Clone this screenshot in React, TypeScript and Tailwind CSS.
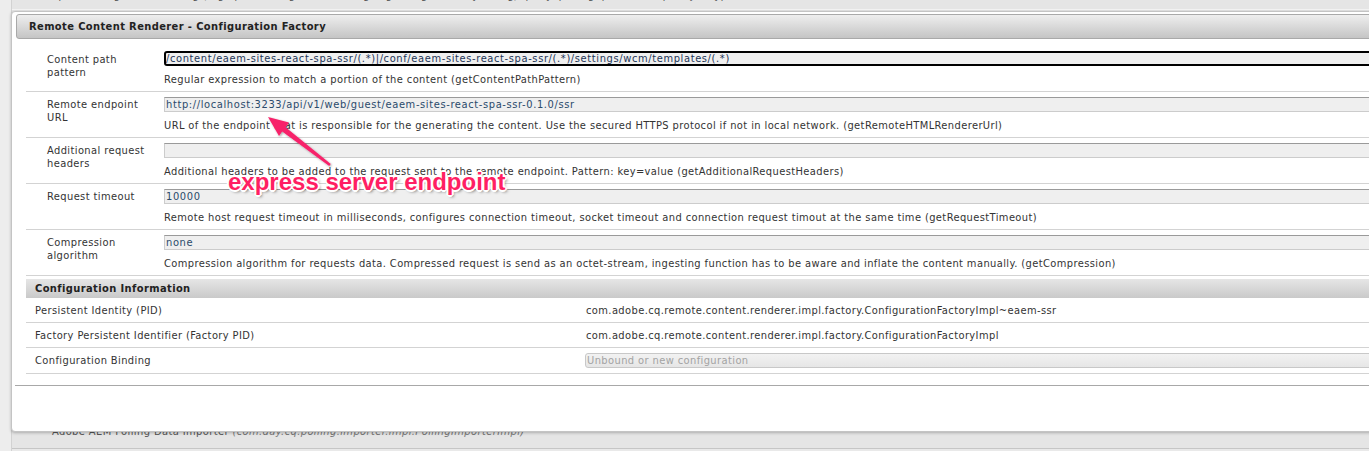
import React from "react";

type Row = {
  label: string[];
  value: React.ReactNode;
  desc: string;
  focused?: boolean;
};

const Sq = ({ children }: { children: React.ReactNode }) => (
  <span className="underline decoration-wavy decoration-[#e03030] decoration-[1px] underline-offset-[2px]">
    {children}
  </span>
);

const rows: Row[] = [
  {
    label: ["Content path", "pattern"],
    value: (
      <>
        /content/<Sq>eaem</Sq>-sites-react-spa-<Sq>ssr</Sq>/(.*)|/<Sq>conf</Sq>/<Sq>eaem</Sq>-sites-react-spa-<Sq>ssr</Sq>/(.*)/settings/<Sq>wcm</Sq>/templates/(.*)
      </>
    ),
    desc: "Regular expression to match a portion of the content (getContentPathPattern)",
    focused: true,
  },
  {
    label: ["Remote endpoint", "URL"],
    value: "http://localhost:3233/api/v1/web/guest/eaem-sites-react-spa-ssr-0.1.0/ssr",
    desc: "URL of the endpoint that is responsible for the generating the content. Use the secured HTTPS protocol if not in local network. (getRemoteHTMLRendererUrl)",
  },
  {
    label: ["Additional request", "headers"],
    value: "",
    desc: "Additional headers to be added to the request sent to the remote endpoint. Pattern: key=value (getAdditionalRequestHeaders)",
  },
  {
    label: ["Request timeout"],
    value: "10000",
    desc: "Remote host request timeout in milliseconds, configures connection timeout, socket timeout and connection request timout at the same time (getRequestTimeout)",
  },
  {
    label: ["Compression", "algorithm"],
    value: "none",
    desc: "Compression algorithm for requests data. Compressed request is send as an octet-stream, ingesting function has to be aware and inflate the content manually. (getCompression)",
  },
];

export default function App() {
  return (
    <div className="relative w-[1369px] h-[451px] overflow-hidden bg-[#e5e5e5] font-['DejaVu_Sans_Condensed','DejaVu_Sans',sans-serif] text-[11px] leading-[13px] tracking-[0.4px] text-[#333]">
      {/* background page */}
      <div className="flex h-full">
        <div className="w-[12px] h-full bg-[#ededed] border-r border-[#d2d2d2]" />
        <div className="flex-1 flex flex-col">
          <div className="h-[10px] overflow-hidden border-b border-[#f4f4f4] pl-[40px]">
            <div className="-mt-[11px] whitespace-nowrap text-[#555] italic">
              Apache Sling Commons Log (org.apache.sling.commons.log.LogManager.factory.config) query, polling, param, adapter, jcr, type
            </div>
          </div>
          <div className="flex-1" />
          <div className="h-[30px] border-b border-[#c6c6c6] pl-[40px] pt-[6px] whitespace-nowrap text-[#555]">
            Adobe AEM Polling Data Importer{" "}
            <span className="italic text-[#777]">(com.day.cq.polling.importer.impl.PollingImporterImpl)</span>
          </div>
          <div className="h-[2px] bg-[#e9e9e9]" />
        </div>
      </div>

      {/* dialog */}
      <div className="absolute left-[11px] top-[11px] w-[1400px] h-[421px] bg-white border border-[#c4c4c4] rounded-[4px] shadow-[0_1px_3px_rgba(0,0,0,0.25)] flex flex-col">
        <div className="ml-[4px] mt-[2px] h-[25px] rounded-[3px] border border-[#a9a9a9] bg-gradient-to-b from-[#eeeeee] to-[#c5c5c5] flex items-center pl-[12px] font-bold text-[#222]">
          Remote Content Renderer - Configuration Factory
        </div>

        <div className="ml-[14px] mt-[7px] flex flex-col">
          {rows.map((r, i) => (
            <div key={i} className="flex border-b border-[#d3d3d3]">
              <div className={`w-[138px] shrink-0 pl-[21px] whitespace-nowrap ${i === 0 ? "pt-[7px]" : "pt-[6px]"}`}>
                {r.label.map((l, j) => (
                  <div key={j}>{l}</div>
                ))}
              </div>
              <div className="flex-1 pt-[5px] pb-[5px] min-w-0">
                {r.focused ? (
                  <div className="h-[15px] border-2 border-black rounded-[3px] bg-[#efefef] flex items-center whitespace-nowrap tracking-[0.62px] text-[#1d3557] overflow-hidden">
                    {r.value}
                  </div>
                ) : (
                  <div className="h-[15px] border border-[#cccccc] border-t-[#9a9a9a] bg-[#efefef] pl-[1px] flex items-center whitespace-nowrap tracking-[0.62px] text-[#2a4a6b] overflow-hidden">
                    {r.value}
                  </div>
                )}
                <div className="mt-[7px] whitespace-nowrap">{r.desc}</div>
              </div>
            </div>
          ))}

          <div className="mt-[3px] h-[19px] bg-gradient-to-b from-[#e6e6e6] to-[#c9c9c9] flex items-center pl-[9px] font-bold text-[#222]">
            Configuration Information
          </div>
          <div className="flex h-[25px] items-center border-b border-[#d3d3d3]">
            <div className="w-[560px] pl-[9px] shrink-0">Persistent Identity (PID)</div>
            <div className="whitespace-nowrap">com.adobe.cq.remote.content.renderer.impl.factory.ConfigurationFactoryImpl~eaem-ssr</div>
          </div>
          <div className="flex h-[25px] items-center border-b border-[#d3d3d3]">
            <div className="w-[560px] pl-[9px] shrink-0">Factory Persistent Identifier (Factory PID)</div>
            <div className="whitespace-nowrap">com.adobe.cq.remote.content.renderer.impl.factory.ConfigurationFactoryImpl</div>
          </div>
          <div className="flex h-[26px] items-center border-b border-[#d3d3d3]">
            <div className="w-[559px] pl-[9px] shrink-0">Configuration Binding</div>
            <div className="flex-1 h-[15px] border border-[#c8c8c8] rounded-l-[3px] bg-gradient-to-b from-[#f2f2f2] to-[#e6e6e6] pl-[1px] flex items-center text-[#a3a3a3] whitespace-nowrap">
              Unbound or new configuration
            </div>
          </div>
        </div>

        <div className="mt-[11px] ml-[3px] border-t border-[#a8a8a8]" />
      </div>

      {/* annotation */}
      <svg className="absolute left-0 top-0 pointer-events-none" width="1369" height="451">
        <defs>
          <filter id="sh" x="-20%" y="-20%" width="140%" height="140%">
            <feDropShadow dx="1" dy="1" stdDeviation="1" floodColor="#000" floodOpacity="0.35" />
          </filter>
        </defs>
        <polygon
          points="268,117 289,122.5 285.6,127.2 330.8,164 329.2,166 282.2,131.5 279,136"
          fill="#f7246b"
          filter="url(#sh)"
        />
      </svg>
      <div className="absolute left-[228px] top-[169px] font-['Liberation_Sans',Arial,sans-serif] font-bold text-[24px] leading-[26px] tracking-normal text-[#ff1f63] whitespace-nowrap [text-shadow:-1px_-1px_0_#fff,1px_-1px_0_#fff,-1px_1px_0_#fff,1px_1px_0_#fff,0_-2px_0_#fff,0_2px_0_#fff,-2px_0_0_#fff,2px_0_0_#fff,2px_2px_3px_rgba(0,0,0,0.5)]">
        express server endpoint
      </div>
    </div>
  );
}
